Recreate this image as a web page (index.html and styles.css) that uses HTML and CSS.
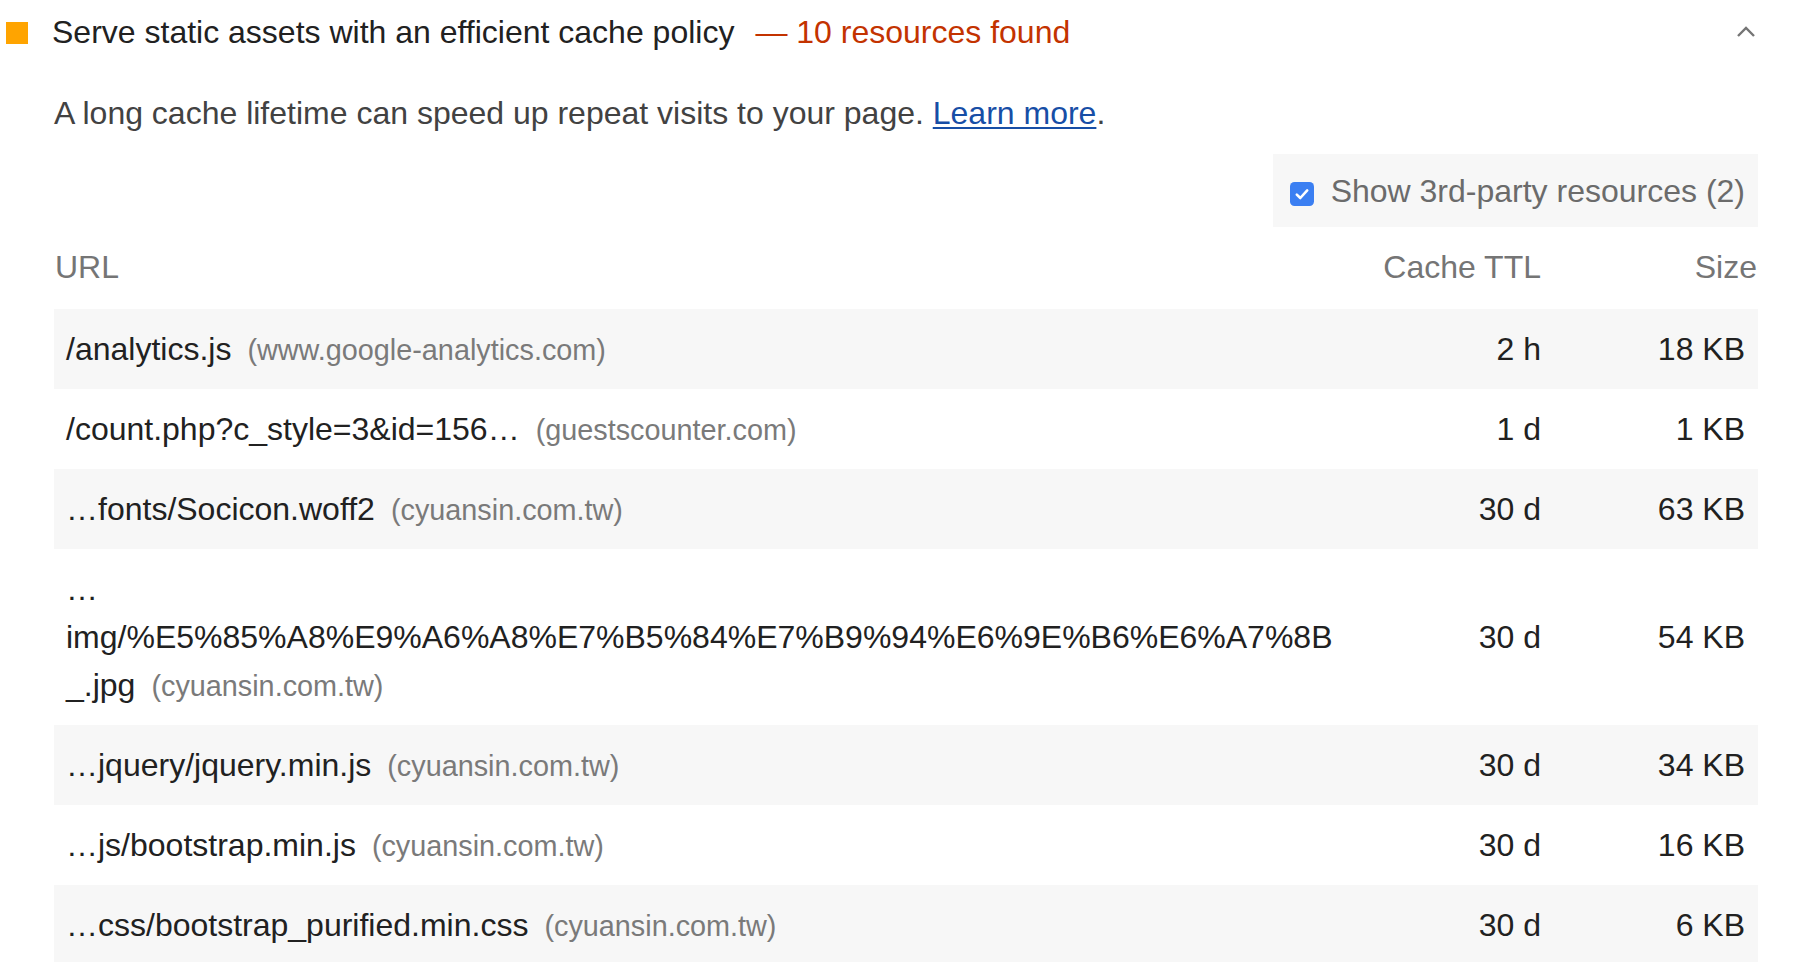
FILE: index.html
```html
<!DOCTYPE html>
<html lang="en">
<head>
<meta charset="utf-8">
<title>Serve static assets with an efficient cache policy</title>
<link rel="stylesheet" href="styles.css">
</head>
<body>
<div class="audit">
  <div class="audit-header">
    <span class="score-icon"></span>
    <span class="title">Serve static assets with an efficient cache policy</span>
    <span class="display-value">— 10 resources found</span>
    <svg class="chevron" width="20" height="12" viewBox="0 0 20 12"><polyline points="2,10 10,2 18,10" fill="none" stroke="#757575" stroke-width="2.4"/></svg>
  </div>
  <div class="details">
    <p class="description">A long cache lifetime can speed up repeat visits to your page. <a class="link" href="#">Learn more</a>.</p>
    <div class="filter-row">
      <label class="filter">
        <svg class="checkbox" width="24" height="24" viewBox="0 0 24 24"><rect x="0" y="0" width="24" height="24" rx="4.5" fill="#3b7ff2"/><path d="M6.8 12.6 L10.3 16 L17.2 8.4" fill="none" stroke="#fff" stroke-width="2.6" stroke-linecap="round" stroke-linejoin="round"/></svg>
        <span class="filter-text">Show 3rd-party resources (2)</span>
      </label>
    </div>
    <div class="table">
      <div class="row head">
        <div class="cell url">URL</div>
        <div class="cell num">Cache TTL</div>
        <div class="cell num last-head">Size</div>
      </div>
      <div class="row shade">
        <div class="cell url">/analytics.js<span class="host">(www.google-analytics.com)</span></div>
        <div class="cell num">2 h</div>
        <div class="cell num size">18 KB</div>
      </div>
      <div class="row">
        <div class="cell url">/count.php?c_style=3&amp;id=156…<span class="host">(guestscounter.com)</span></div>
        <div class="cell num">1 d</div>
        <div class="cell num size">1 KB</div>
      </div>
      <div class="row shade">
        <div class="cell url">…fonts/Socicon.woff2<span class="host">(cyuansin.com.tw)</span></div>
        <div class="cell num">30 d</div>
        <div class="cell num size">63 KB</div>
      </div>
      <div class="row">
        <div class="cell url">…<br>img/%E5%85%A8%E9%A6%A8%E7%B5%84%E7%B9%94%E6%9E%B6%E6%A7%8B<br>_.jpg<span class="host">(cyuansin.com.tw)</span></div>
        <div class="cell num">30 d</div>
        <div class="cell num size">54 KB</div>
      </div>
      <div class="row shade">
        <div class="cell url">…jquery/jquery.min.js<span class="host">(cyuansin.com.tw)</span></div>
        <div class="cell num">30 d</div>
        <div class="cell num size">34 KB</div>
      </div>
      <div class="row">
        <div class="cell url">…js/bootstrap.min.js<span class="host">(cyuansin.com.tw)</span></div>
        <div class="cell num">30 d</div>
        <div class="cell num size">16 KB</div>
      </div>
      <div class="row shade">
        <div class="cell url">…css/bootstrap_purified.min.css<span class="host">(cyuansin.com.tw)</span></div>
        <div class="cell num">30 d</div>
        <div class="cell num size">6 KB</div>
      </div>
    </div>
  </div>
</div>
</body>
</html>
```

FILE: styles.css
```css
html, body {
  margin: 0;
  padding: 0;
  background: #ffffff;
}

body {
  font-family: "Liberation Sans", Arial, Helvetica, sans-serif;
  font-size: 32px;
  line-height: 48px;
  color: #212121;
  overflow: hidden;
}

.audit {
  padding: 8px 36px 0 6px;
}

.audit-header {
  display: flex;
  align-items: center;
  height: 48px;
}

.score-icon {
  width: 22px;
  height: 22px;
  background: #ffa400;
  margin-top: 2px;
  flex: none;
}

.title {
  margin-left: 24px;
  color: #212121;
}

.display-value {
  margin-left: 21px;
  color: #c33300;
}

.chevron {
  margin-left: auto;
  margin-right: 2px;
  margin-top: -1px;
}

.details {
  margin-left: 48px;
}

.description {
  margin: 33px 0 0 0;
  color: #424242;
}

.link {
  color: #174ea6;
  text-decoration: underline;
  text-underline-offset: 3px;
  text-decoration-thickness: 2px;
}

.filter-row {
  display: flex;
  justify-content: flex-end;
  margin-top: 17px;
}

.filter {
  display: flex;
  align-items: center;
  height: 73px;
  padding: 0 13px 0 17px;
  background: #f7f7f7;
}

.checkbox {
  margin-top: 6px;
  flex: none;
}

.filter-text {
  margin-left: 17px;
  color: #6b6b6b;
}

.table {
  width: 1704px;
}

.row {
  display: grid;
  grid-template-columns: 1fr 199px 205px;
}

.row.shade {
  background: #f7f7f7;
}

.cell {
  padding: 16px 12px;
}

.row.head .cell {
  padding-top: 16px;
  padding-bottom: 18px;
  color: #757575;
}

.row.head .url {
  padding-left: 1px;
}

.num {
  text-align: right;
  align-self: center;
}

.size {
  padding-right: 13px;
}

.row.head .last-head {
  padding-right: 1px;
}

.host {
  margin-left: 16px;
  font-size: 28.8px;
  line-height: 1;
  color: #7a7a7a;
}
```
